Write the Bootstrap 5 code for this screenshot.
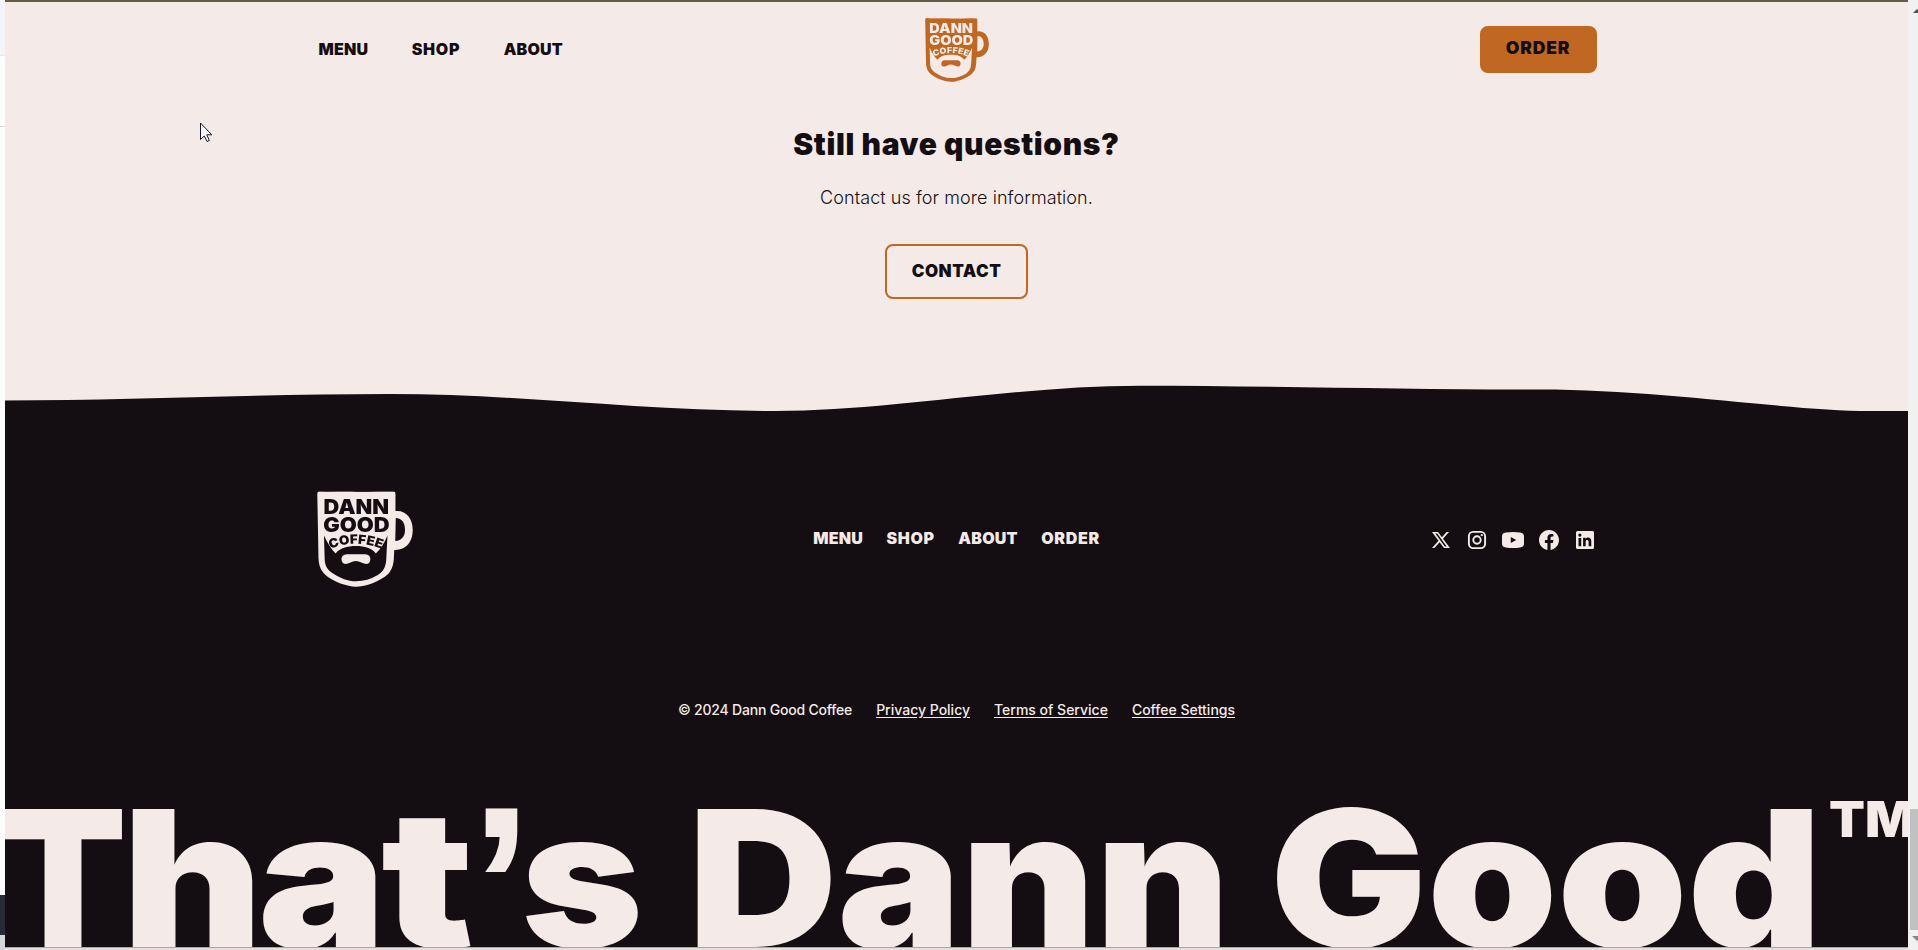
<!DOCTYPE html>
<html lang="en">
<head>
<meta charset="utf-8">
<title>Dann Good Coffee</title>
<link href="https://cdn.jsdelivr.net/npm/bootstrap@5.3.0/dist/css/bootstrap.min.css" rel="stylesheet">
<style>
:root{--cream:#f4ebe8;--ink:#140e12;--copper:#c06722}
body{height:950px;font-family:Inter,"Liberation Sans",sans-serif;color:var(--ink);background:#fff}
.edge{width:5px}
.edge-a{height:55px;background:#f3f4f7;border-bottom:1px solid #e8e9ec;box-sizing:content-box}
.edge-b{height:71px;border-bottom:1px solid #ddd}
.edge-c{height:768px}
.edge-d{height:40px;background:#282a35}
.edge-e{background:#d5d6d9}
.site{width:1903px;background:var(--cream)}
.topline{height:2px;background:#625d47}
.wrap{width:1280px;margin:0 auto}
.site-head{height:95px}
.caps{font-weight:900;font-size:16px;line-height:24px;letter-spacing:.2px;color:inherit;text-decoration:none;white-space:nowrap;padding-bottom:2px}
.caps-wide{letter-spacing:.7px}
.head-links{gap:43.500px;padding-left:2px}
.side{flex:1 1 0}
.mark-link{color:var(--copper);margin-left:-2px}
.btn-site{font-weight:900;line-height:24px;border-radius:8px;border:2px solid var(--copper);color:var(--ink);padding:0}
.btn-order{width:117px;height:47px;background:var(--copper);font-size:17.500px;letter-spacing:.8px;padding-bottom:3px}
.btn-contact{width:143px;height:55px;font-size:17px;letter-spacing:.5px;padding-bottom:2px}
.cta{height:288px;padding-top:27px}
.cta h2{font-weight:900;font-size:30px;line-height:40px;letter-spacing:.62px;margin:0 0 20px;white-space:nowrap}
.cta p{font-weight:300;font-size:18px;line-height:27px;letter-spacing:.07px;margin:0 0 33px}
.foot{background:var(--ink);color:var(--cream);height:536px}
.foot-main{height:96px;margin-top:80px}
.foot-links{gap:23.500px}
.social{gap:12px;padding-top:1px}
.legal{gap:24px;margin-top:112px;font-size:14px;line-height:21px;font-weight:500}
.legal a{color:inherit;text-underline-offset:2px}
.legal span{letter-spacing:-.2px}
.slogan{margin-top:auto}
.base{height:3px;background:#e3e0de;border-top:1px solid #aaa6a8}
.bar{width:10px;background:#f1f1f1}
.cursor{left:200px;top:122px}
</style>
</head>
<body class="d-flex overflow-hidden">
<svg width="0" height="0" class="position-absolute">
  <defs>
    <mask id="cup" maskUnits="userSpaceOnUse" x="0" y="0" width="97" height="97">
      <path fill="#fff" d="M2.500 0C15 1 28-.3 39 .5 50 .8 64-.2 76 .2 78 .2 78.700 1 78.700 3V20C90 19 96.300 28 96 39.500 96 51 89 59.500 77.500 59L77 69C76 78 73 83 66 87 58 92 48 95.800 39 95.800 30 95.500 18 91 11 86 4 81 1.800 75 1.500 67L.3 3C.3 1 1 0 2.500 0Z"/>
      <path fill="#000" d="M79 27C85 27 88.300 32 88.300 39 88.300 46 84 50 78.500 50Z"/>
      <path fill="#000" d="M7 44.500C10 51 14 58 18.700 62.500 23 57 30 55 39 55 48 55 55 57 59 62.500 64 58 68 51 70.700 44.500L69.500 68C69 76 67 80 61 84 54 88 47 90.300 39 90.300 31 90.300 23 87 17 83 10 79 8 75 7.700 68Z"/>
      <path fill="#fff" d="M30 63.300H48.500C55.500 63.300 54.500 73 50 73 46 73 43 70 39 70 35 70 32 73 28.500 73 23.500 73 22.500 63.300 30 63.300Z"/>
      <path id="arc" fill="none" d="M13 58Q39 47.500 65 58"/>
      <g fill="#000" font-family="Inter,sans-serif" font-weight="900">
        <text x="6.500" y="22.700" font-size="20.200" textLength="65.700" lengthAdjust="spacingAndGlyphs">DANN</text>
        <text x="6.300" y="40.900" font-size="20.200" textLength="66.500" lengthAdjust="spacingAndGlyphs">GOOD</text>
        <text font-size="12.800" text-anchor="middle"><textPath href="#arc" startOffset="50%" textLength="53" lengthAdjust="spacingAndGlyphs">COFFEE</textPath></text>
      </g>
    </mask>
    <symbol id="logo" viewBox="0 0 96.300 96"><rect width="97" height="97" fill="currentColor" mask="url(#cup)"/></symbol>
  </defs>
</svg>

<aside class="edge d-flex flex-column flex-shrink-0">
  <div class="edge-a flex-shrink-0"></div><div class="edge-b flex-shrink-0"></div><div class="edge-c flex-shrink-0"></div><div class="edge-d flex-shrink-0"></div><div class="edge-e flex-grow-1"></div>
</aside>

<div class="site d-flex flex-column flex-shrink-0">
  <div class="topline"></div>
  <header class="site-head">
    <nav class="wrap h-100 d-flex align-items-center">
      <div class="side d-flex head-links"><a class="caps" href="#">MENU</a><a class="caps caps-wide" href="#">SHOP</a><a class="caps" href="#">ABOUT</a></div>
      <a href="#" class="mark-link"><svg width="64" height="64" class="d-block"><use href="#logo"/></svg></a>
      <div class="side d-flex justify-content-end"><a class="btn btn-site btn-order d-flex align-items-center justify-content-center" href="#">ORDER</a></div>
    </nav>
  </header>

  <section class="cta d-flex flex-column align-items-center">
    <h2>Still have questions?</h2>
    <p>Contact us for more information.</p>
    <a class="btn btn-site btn-contact d-flex align-items-center justify-content-center" href="#">CONTACT</a>
  </section>

  <svg class="d-block flex-shrink-0" width="1903" height="26" viewBox="0 0 1903 26"><path fill="#140e12" d="M0 15.500C130 15.500 255 9 385 9 515 9 635 26 770 26 885 26 1010 .8 1135 .8 1265 .8 1415 5 1535 4.500 1655 4.500 1785 26 1865 26H0Z"/></svg>

  <footer class="foot d-flex flex-column">
    <div class="wrap foot-main d-flex align-items-center flex-shrink-0">
      <div class="side"><svg width="96" height="96" class="d-block"><use href="#logo"/></svg></div>
      <div class="d-flex foot-links"><a class="caps" href="#">MENU</a><a class="caps caps-wide" href="#">SHOP</a><a class="caps" href="#">ABOUT</a><a class="caps caps-wide" href="#">ORDER</a></div>
      <div class="side d-flex justify-content-end social">
        <svg width="24" height="24" viewBox="0 0 24 24"><path fill="currentColor" fill-rule="evenodd" d="M3 4H9L12.900 9.300 17.600 4H20L14 10.700 21 20H15L10.600 14.200 5.400 20H3L9.500 12.700ZM6.300 5.500 15.800 18.500H17.700L8.200 5.500Z"/></svg>
        <svg width="24" height="24" viewBox="0 0 24 24" fill="none" stroke="currentColor" stroke-width="1.900"><rect x="3.900" y="3.900" width="16.200" height="16.200" rx="4.300"/><circle cx="12" cy="12" r="3.700"/><circle cx="16.800" cy="7.200" r="1.100" fill="currentColor" stroke="none"/></svg>
        <svg width="24" height="24" viewBox="0 0 24 24"><path fill="currentColor" fill-rule="evenodd" d="M5 4.500Q12 3.500 19 4.500C22 4.800 22.800 6 23 8.500V15.500C22.800 18 22 19.200 19 19.500Q12 20.500 5 19.500C2 19.200 1.200 18 1 15.500V8.500C1.200 6 2 4.800 5 4.500ZM9.800 8.900V15.100L15.200 12Z"/></svg>
        <svg width="24" height="24" viewBox="0 0 24 24"><path fill="currentColor" d="M22 12.060C22 6.500 17.500 2 12 2S2 6.500 2 12.060C2 17.060 5.660 21.210 10.440 21.960V14.960H7.900V12.060H10.440V9.850C10.440 7.340 11.930 5.960 14.220 5.960 15.310 5.960 16.450 6.150 16.450 6.150V8.620H15.190C13.950 8.620 13.560 9.390 13.560 10.180V12.060H16.340L15.890 14.960H13.560V21.960C18.340 21.210 22 17.060 22 12.060Z"/></svg>
        <svg width="24" height="24" viewBox="0 0 24 24"><path fill="currentColor" fill-rule="evenodd" d="M4.500 3H19.500Q21 3 21 4.500V19.500Q21 21 19.500 21H4.500Q3 21 3 19.500V4.500Q3 3 4.500 3ZM18.300 18.300V13.200C18.300 10.800 17 9.600 15 9.600 13.900 9.600 13.100 10.200 12.700 10.900V9.800H10.100V18.300H12.700V13.800C12.700 12.700 13.300 12.100 14.200 12.100 15.200 12.100 15.600 12.900 15.600 13.900V18.300ZM5.500 9.900V18.300H8.200V9.900ZM6.900 5.500A1.600 1.600 0 1 0 6.900 8.700 1.600 1.600 0 1 0 6.900 5.500Z"/></svg>
      </div>
    </div>
    <div class="legal d-flex justify-content-center text-nowrap">
      <span>© 2024 Dann Good Coffee</span><a href="#">Privacy Policy</a><a href="#">Terms of Service</a><a href="#">Coffee Settings</a>
    </div>
    <svg class="slogan d-block flex-shrink-0" width="1903" height="160" viewBox="5 787 1903 160" fill="#f4ebe8" font-family="Inter,sans-serif" font-weight="900" font-size="190">
      <text y="946.500"><tspan x="-1" textLength="128" lengthAdjust="spacingAndGlyphs">T</tspan><tspan x="122" textLength="141" lengthAdjust="spacingAndGlyphs">h</tspan><tspan x="258" textLength="128" lengthAdjust="spacingAndGlyphs">a</tspan><tspan x="381" textLength="93" lengthAdjust="spacingAndGlyphs">t</tspan><tspan x="470" y="963" font-family="Liberation Sans" font-weight="700" font-size="225">’</tspan><tspan x="521" y="946.500" textLength="122" lengthAdjust="spacingAndGlyphs">s</tspan></text>
      <text x="688" y="946.500" textLength="542" lengthAdjust="spacingAndGlyphs">Dann</text>
      <text x="1270" y="946.500" textLength="552" lengthAdjust="spacingAndGlyphs">Good</text>
      <text x="1829" y="837" font-size="49" textLength="86" lengthAdjust="spacingAndGlyphs">TM</text>
    </svg>
  </footer>
  <div class="base flex-shrink-0"></div>
</div>

<svg class="bar flex-shrink-0" width="10" height="950" viewBox="0 0 10 950"><path fill="#505050" d="M5 13 9 9 13 13Z"/><rect x="2" y="809" width="8" height="121" fill="#c1c1c1"/><path fill="#8a8a8a" d="M4 936H14L9 941Z"/></svg>
<svg class="cursor position-absolute" width="14" height="22" viewBox="0 0 14 22"><path fill="#fff" stroke="#17142a" stroke-width="1" d="M.5 1V17.500L4.300 14 7 19.500 9.300 18.500 6.800 12.800H11.800Z"/></svg>
<script src="https://cdn.jsdelivr.net/npm/bootstrap@5.3.0/dist/js/bootstrap.bundle.min.js"></script>
</body>
</html>
